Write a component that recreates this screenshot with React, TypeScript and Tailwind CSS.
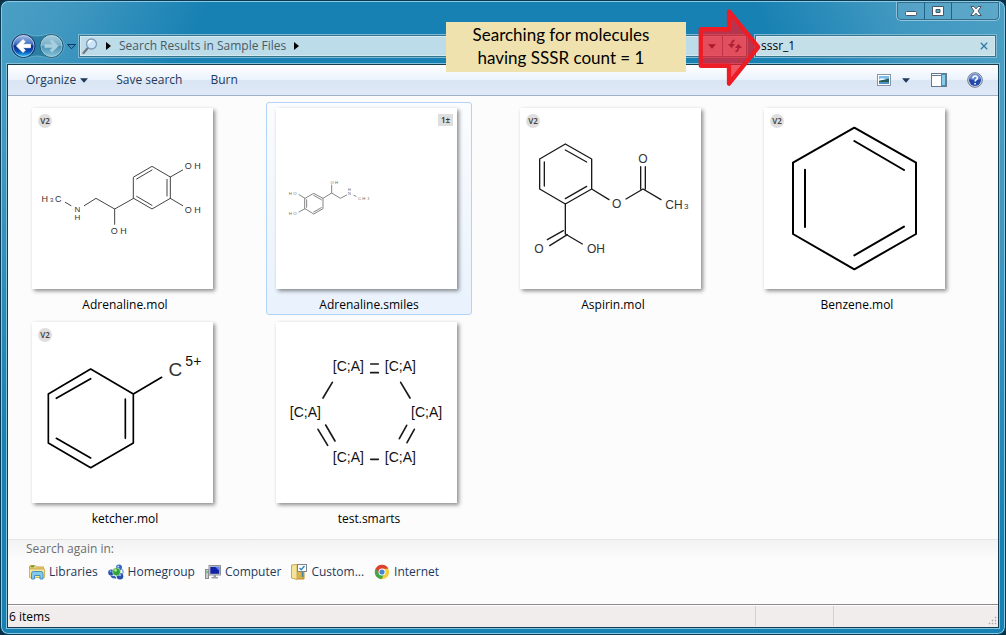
import type { ReactNode } from 'react';

const ink = '#1a1a1a';

function Label({ x, y, size, children, fill = '#333' }: { x: number; y: number; size: number; children: ReactNode; fill?: string }) {
  return (
    <text x={x} y={y} fontSize={size} fill={fill} textAnchor="middle" fontFamily="'Liberation Sans', Arial, sans-serif">
      {children}
    </text>
  );
}

function Drawing({ box, width, color = ink, d, children }: { box: string; width: number; color?: string; d: string; children?: ReactNode }) {
  return (
    <svg viewBox={box} className="block h-full w-full" aria-hidden="true">
      <path d={d} fill="none" stroke={color} strokeWidth={width} strokeLinecap="round" strokeLinejoin="round" />
      {children}
    </svg>
  );
}

const adrenalineMol = (
  <Drawing
    box="36 24 543 543"
    width={3}
    color="#444"
    d="M341 231L396 199L451 231V295L396 327L341 295ZM350 237L396 210M441 238V288M350 289L396 316M451 231L488 210M451 295L488 317M341 295L284 327L228 295L193 317M284 327V373M153 317L136 307"
  >
    <Label x={518} y={208} size={27}>O H</Label>
    <Label x={518} y={338} size={27}>O H</Label>
    <Label x={296} y={402} size={27}>O H</Label>
    <Label x={172} y={335} size={24}>N</Label>
    <Label x={172} y={360} size={24}>H</Label>
    <Label x={74} y={305} size={27}>H</Label>
    <Label x={95} y={305} size={18}>3</Label>
    <Label x={115} y={305} size={27}>C</Label>
  </Drawing>
);

const adrenalineSmiles = (
  <Drawing
    box="48 36 543 543"
    width={3}
    color="#858585"
    d="M135 307L161 292L189 307V338L161 354L135 338ZM140 311V334M161 298L184 311M161 348L184 335M135 307L117 296M135 338L117 348M189 307L215 291L241 307L260 297M215 291V267M282 298L288 301"
  >
    <Label x={98} y={296} size={13} fill="#666">H O</Label>
    <Label x={98} y={357} size={13} fill="#666">H O</Label>
    <Label x={223} y={264} size={13} fill="#666">O H</Label>
    <Label x={268} y={285} size={12} fill="#666">H</Label>
    <Label x={268} y={298} size={12} fill="#666">N</Label>
    <Label x={305} y={311} size={13} fill="#666">C H</Label>
    <Label x={325} y={313} size={9} fill="#666">3</Label>
  </Drawing>
);

const aspirin = (
  <Drawing
    box="30 24 543 543"
    width={4}
    d="M166 132L245 177V267L166 312L89 267V177ZM166 150L230 186M103 186V258M166 296L230 259M245 267L297 299M166 312V402M160 392L112 419M172 404L119 437M166 402L217 432M348 297L399 267L453 299M392 267V200M406 267V200"
  >
    <Label x={320} y={325} size={36}>O</Label>
    <Label x={399} y={189} size={36}>O</Label>
    <Label x={87} y={459} size={36}>O</Label>
    <Label x={258} y={459} size={36}>OH</Label>
    <Label x={492} y={326} size={36}>CH</Label>
    <Label x={529} y={326} size={24}>3</Label>
  </Drawing>
);

const benzene = (
  <Drawing
    box="27 24 543 543"
    width={6}
    color="#000"
    d="M298 83L483 188V402L298 508L114 402V188ZM298 123L447 210M150 209V381M298 466L447 380"
  />
);

const ketcher = (
  <Drawing
    box="36 18 543 543"
    width={5}
    color="#000"
    d="M212 159L340 234V381L212 455L85 381V234ZM212 188L109 247M316 249V367M109 367L212 426M340 234L425 184"
  >
    <Label x={466} y={180} size={57}>C</Label>
    <Label x={520} y={151} size={42} fill="#111">5+</Label>
  </Drawing>
);

const smarts = (
  <Drawing
    box="33 18 543 543"
    width={5}
    d="M317 144H340M317 170H340M317 430H340M202 199L174 246M407 199L435 246M159 340L188 388M182 327L210 375M425 328L403 368M448 340L426 380"
  >
    <Label x={250} y={166} size={42} fill="#111">[C;A]</Label>
    <Label x={406} y={166} size={42} fill="#111">[C;A]</Label>
    <Label x={121} y={302} size={42} fill="#111">[C;A]</Label>
    <Label x={485} y={302} size={42} fill="#111">[C;A]</Label>
    <Label x={250} y={438} size={42} fill="#111">[C;A]</Label>
    <Label x={406} y={438} size={42} fill="#111">[C;A]</Label>
  </Drawing>
);

type FileItem = { name: string; badge?: 'V2' | '1±'; selected?: boolean; art: ReactNode };

const files: FileItem[] = [
  { name: 'Adrenaline.mol', badge: 'V2', art: adrenalineMol },
  { name: 'Adrenaline.smiles', badge: '1±', selected: true, art: adrenalineSmiles },
  { name: 'Aspirin.mol', badge: 'V2', art: aspirin },
  { name: 'Benzene.mol', badge: 'V2', art: benzene },
  { name: 'ketcher.mol', badge: 'V2', art: ketcher },
  { name: 'test.smarts', art: smarts },
];

function FileTile({ file }: { file: FileItem }) {
  return (
    <li
      className={
        file.selected
          ? 'h-[213px] rounded-[3px] border border-[#b3d4f7] bg-linear-to-b from-[#fbfcfe] to-[#e9f2fd]'
          : 'h-[213px] border border-transparent'
      }
    >
      <div className="relative mt-[5px] ml-[9px] size-[181px] bg-white shadow-[2px_2px_4px_rgba(0,0,0,0.45)]">
        {file.art}
        {file.badge === 'V2' && (
          <span className="absolute top-[6px] left-[6px] flex size-[14px] items-center justify-center rounded-full bg-[#dedede] font-['Noto_Sans',sans-serif] text-[8px] font-semibold text-[#444]">
            V2
          </span>
        )}
        {file.badge === '1±' && (
          <span className="absolute top-[6px] right-[4px] flex h-[12px] w-[15px] items-center justify-center bg-[#dedede] font-['Noto_Sans',sans-serif] text-[8px] font-semibold text-[#333]">
            1±
          </span>
        )}
      </div>
      <p className="mt-[8px] text-center text-[12px] leading-[16px] text-black">{file.name}</p>
    </li>
  );
}

function Caret({ className }: { className: string }) {
  return (
    <svg viewBox="0 0 8 5" className={className} aria-hidden="true">
      <path d="M0 0.3H8L4 4.7Z" fill="currentColor" />
    </svg>
  );
}

function Chevron() {
  return (
    <svg viewBox="0 0 5 8" className="h-[8px] w-[5px]" aria-hidden="true">
      <path d="M0 0L5 4L0 8Z" fill="#000" />
    </svg>
  );
}

function NavButtons() {
  return (
    <div className="relative flex h-[26px] w-[68px] items-center">
      <svg viewBox="0 0 68 26" className="absolute inset-0 h-[26px] w-[68px]" aria-hidden="true">
        <defs>
          <linearGradient id="back" x1="0" y1="0" x2="0" y2="1">
            <stop offset="0" stopColor="#a9c1e8" />
            <stop offset=".42" stopColor="#3f6fc0" />
            <stop offset=".5" stopColor="#0a2d8c" />
            <stop offset=".75" stopColor="#0c54b8" />
            <stop offset="1" stopColor="#35d6ff" />
          </linearGradient>
          <linearGradient id="fwd" x1="0" y1="0" x2="0" y2="1">
            <stop offset="0" stopColor="#a9cddd" />
            <stop offset=".48" stopColor="#76aec8" />
            <stop offset=".52" stopColor="#4b93b5" />
            <stop offset="1" stopColor="#8cc6d9" />
          </linearGradient>
        </defs>
        <path d="M13 .7C19 .7 21 3 27 3S36 .7 42 .7A12.3 12.3 0 0 1 42 25.3C36 25.3 33 23 27 23S19 25.3 13 25.3A12.3 12.3 0 0 1 13 .7Z" fill="#2a7da3" stroke="#66acca" />
        <circle cx="13.5" cy="13" r="11.5" fill="url(#back)" stroke="#16315f" />
        <circle cx="13.5" cy="13" r="10.5" fill="none" stroke="#d5e4f5" strokeOpacity=".6" />
        <path d="M6.500 13L13 6.500L15.300 8.800L12.800 11.300H20.500V14.700H12.800L15.300 17.200L13 19.500Z" fill="#fff" stroke="#fff" strokeWidth=".8" strokeLinejoin="round" />
        <circle cx="41.5" cy="13" r="11.5" fill="url(#fwd)" stroke="#205f7c" />
        <circle cx="41.5" cy="13" r="10.5" fill="none" stroke="#c5e0ea" strokeOpacity=".5" />
        <path d="M48.500 13L42 6.500L39.700 8.800L42.200 11.300H34.500V14.700H42.200L39.700 17.200L42 19.500Z" fill="#a8cfdf" />
        <path d="M57.500 11.500H65.500L61.500 15.800Z" fill="#3f94bd" stroke="#083b63" />
      </svg>
      <button type="button" aria-label="Back" className="relative h-[26px] w-[27px] rounded-full" />
      <button type="button" aria-label="Forward" className="relative h-[26px] w-[27px] rounded-full" />
      <button type="button" aria-label="Recent pages" className="relative h-[26px] w-[14px]" />
    </div>
  );
}

function WindowButtons() {
  return (
    <div className="mr-[-1px] flex h-[19px] rounded-b-[5px] border border-t-0 border-[#8fc3db] shadow-[inset_0_0_0_1px_#1f5f80]">
      <button type="button" aria-label="Minimize" className="flex w-[28px] items-center justify-center border-r border-[#1f6488] bg-white/10">
        <svg viewBox="0 0 14 12" className="h-[12px] w-[14px]" aria-hidden="true">
          <rect x="1.5" y="6.5" width="11" height="4" rx="1" fill="#fff" stroke="#4b5563" />
        </svg>
      </button>
      <button type="button" aria-label="Maximize" className="flex w-[27px] items-center justify-center border-r border-[#1f6488] bg-white/10">
        <svg viewBox="0 0 12 12" className="size-[12px]" aria-hidden="true">
          <path d="M.5 1.500H11.500V10.500H.5ZM4 4.500V7.500H8V4.500Z" fill="#fff" fillRule="evenodd" stroke="#4b5563" />
        </svg>
      </button>
      <button type="button" aria-label="Close" className="flex w-[47px] items-center justify-center rounded-br-[5px] bg-white/10">
        <svg viewBox="0 0 12 12" className="size-[12px]" aria-hidden="true">
          <path d="M.8 1.500H4L6 3.800L8 1.500H11.200L8 6L11.200 10.500H8L6 8.200L4 10.500H.8L4 6Z" fill="#fff" stroke="#4b5563" />
        </svg>
      </button>
    </div>
  );
}

function AddressBar() {
  return (
    <div className="flex h-[24px] min-w-0 flex-1 items-center border border-[#7db7d2] bg-[#bcdcea] shadow-[inset_0_0_0_1px_#34758f,inset_0_0_0_2px_#d4e9f1]">
      <svg viewBox="0 0 16 16" className="ml-[3px] size-[16px] shrink-0" aria-hidden="true">
        <path d="M1.500 15L6 9.800" stroke="#74777c" strokeWidth="2.2" strokeLinecap="round" />
        <circle cx="9.5" cy="6" r="5" fill="#c8e5fb" stroke="#8399b3" strokeWidth="1.3" />
        <path d="M6.500 5.500A3.200 3.200 0 0 1 10 2.800" stroke="#fff" strokeWidth="1.5" fill="none" />
      </svg>
      <nav aria-label="Address" className="ml-[8px] flex flex-1 items-center gap-[8px] text-[12px] text-[#4a5a63]">
        <Chevron />
        <a href="#results" className="whitespace-nowrap">Search Results in Sample Files</a>
        <Chevron />
      </nav>
      <button type="button" aria-label="Previous locations" className="flex h-[22px] w-[20px] items-center justify-center text-[#000820]">
        <Caret className="h-[5px] w-[8px]" />
      </button>
      <button type="button" aria-label="Refresh" className="flex h-[22px] w-[25px] items-center justify-center border-l border-[#3b7792]">
        <svg viewBox="0 0 14 14" className="size-[14px]" aria-hidden="true">
          <path d="M6.500 1.500Q3.500 2 3.500 6M7.500 12.500Q10.500 12 10.500 8" fill="none" stroke="#052a50" strokeWidth="1.8" />
          <path d="M0 5H7L3.500 9.200ZM7 9H14L10.500 4.800Z" fill="#052a50" />
        </svg>
      </button>
    </div>
  );
}

function Callout() {
  return (
    <>
      <p className="absolute top-[21px] right-[319px] flex h-[50px] w-[240px] items-center justify-center bg-[#efe2ae] pr-[10px] pb-[3px] text-center font-[Lato,'Open_Sans',sans-serif] text-[17px] leading-[23px] text-black">
        Searching for molecules
        <br />
        having SSSR count = 1
      </p>
      <svg viewBox="54 22 190 238" className="pointer-events-none absolute top-[7px] right-[243px] h-[79px] w-[64px]" aria-hidden="true">
        <path d="M61 86H146V32L234 140L146 250V196H61Z" fill="#ee1c2c" fillOpacity=".74" stroke="#ee1c24" strokeWidth="13" strokeLinejoin="round" />
      </svg>
    </>
  );
}

function Toolbar() {
  return (
    <div className="flex h-[31px] items-center border-b border-[#a0b1c9] bg-[linear-gradient(#fff_0%,#ebf3fc_48%,#dae5f4_52%,#dfe9f7_100%)] px-[13px] text-[12px] text-[#1e395b]">
      <button type="button" className="ml-[5px] flex items-center gap-[4px]">
        Organize
        <Caret className="h-[5px] w-[8px]" />
      </button>
      <button type="button" className="ml-[28px]">Save search</button>
      <button type="button" className="ml-[28px]">Burn</button>
      <div className="ml-auto flex items-center pr-[2px]">
        <button type="button" aria-label="Change your view" className="flex items-center gap-[11px]">
          <svg viewBox="0 0 14 12" className="h-[12px] w-[14px]" aria-hidden="true">
            <rect x=".5" y=".5" width="13" height="11" fill="#fff" stroke="#8795a8" />
            <path d="M2 2H12V6H2Z" fill="#7dbbe8" />
            <path d="M2 6.500Q7 6 12 4.500V8H2Z" fill="#255c58" />
            <path d="M2 8H12V10H2Z" fill="#4f91c4" />
            <path d="M2 5.500Q4 3.500 7 4.500L9 5.200L2 6.500Z" fill="#f3fbff" />
          </svg>
          <Caret className="h-[5px] w-[8px]" />
        </button>
        <button type="button" aria-label="Show the preview pane" className="ml-[21px]">
          <svg viewBox="0 0 16 14" className="h-[14px] w-[16px]" aria-hidden="true">
            <rect x=".5" y=".5" width="15" height="13" fill="#fff" stroke="#64788f" />
            <path d="M.5 2.500H10" stroke="#64788f" />
            <rect x="10.5" y="1.5" width="4" height="11" fill="#84cce9" stroke="#3e91b6" />
          </svg>
        </button>
        <button type="button" aria-label="Get help" className="ml-[20px]">
          <svg viewBox="0 0 16 16" className="size-[16px]" aria-hidden="true">
            <circle cx="8" cy="8" r="7.3" fill="#d6dbe7" stroke="#6f7890" />
            <circle cx="8" cy="8" r="6" fill="#2449ad" />
            <path d="M2.500 7A5.500 5.500 0 0 1 13.500 7Q8 9 2.500 7Z" fill="#6c8bd4" />
            <path d="M5.800 6.200Q6 4 8.200 4T10.300 6Q10.300 7.200 8.900 8Q8.100 8.500 8.100 9.500M8.100 11V12.500" fill="none" stroke="#fff" strokeWidth="1.6" />
          </svg>
        </button>
      </div>
    </div>
  );
}

const libraryIcon = (
  <svg viewBox="0 0 16 16" className="size-[16px]" aria-hidden="true">
    <path d="M.5 3Q.5 1.500 2 1.500H6L7.500 3H14.500V5H.5Z" fill="#e9d27b" stroke="#c5a64a" />
    <path d="M.5 5H15.500V13.500H.5Z" fill="#f6e59b" stroke="#d2b65a" />
    <path d="M2 2.500H5" stroke="#48a238" strokeWidth="1.5" />
    <path d="M2.500 15V9.500Q2.500 7.500 4.500 7.500H12Q14 7.500 14 9.500V15H11V11.500H5.500V15Z" fill="#86caeb" stroke="#4493bf" />
  </svg>
);

const homegroupIcon = (
  <svg viewBox="0 0 16 16" className="size-[16px]" aria-hidden="true">
    <circle cx="11" cy="3.5" r="3" fill="#3565bf" />
    <circle cx="3.2" cy="8.5" r="3" fill="#2851ad" />
    <circle cx="12" cy="12.2" r="3.3" fill="#2851ad" />
    <circle cx="8.5" cy="7.8" r="4" fill="#2fa336" stroke="#e5f5e4" strokeWidth=".6" />
    <circle cx="7.5" cy="6.3" r="1.5" fill="#9be68a" />
    <circle cx="10.3" cy="2.4" r="1" fill="#b9d5fa" />
    <circle cx="2.5" cy="7.3" r="1" fill="#8dadf0" />
    <circle cx="12" cy="11" r="1.2" fill="#8bb5ee" />
    <path d="M2 11.500Q4 15.500 8.500 14.200L7 12Z" fill="#345fb7" />
    <path d="M13.500 5Q16 7 14.500 10" stroke="#8ba9df" strokeWidth="1.5" fill="none" />
  </svg>
);

const computerIcon = (
  <svg viewBox="0 0 16 16" className="size-[16px]" aria-hidden="true">
    <rect x=".5" y="5.5" width="3" height="9" fill="#c9cccf" stroke="#8a8d91" />
    <path d="M1.500 7H2.500V9H1.500Z" fill="#37a843" />
    <rect x="4" y="1.5" width="11.5" height="9.5" fill="#d8dadd" stroke="#8d9196" />
    <rect x="5.3" y="2.8" width="9" height="7" fill="#1220a5" />
    <path d="M10 2.800H14.300V7Z" fill="#5d83f0" />
    <path d="M8.500 11H11V13H13V14.500H6.500V13H8.500Z" fill="#9da0a5" />
  </svg>
);

const customIcon = (
  <svg viewBox="0 0 16 16" className="size-[16px]" aria-hidden="true">
    <path d="M5 3H13V15H5Z" fill="#d9b24b" stroke="#b98e2d" />
    <path d="M.5 1L6 .5V15.500L.5 14Z" fill="#f5e39b" stroke="#c8aa54" />
    <rect x="6.5" y=".5" width="9" height="7" fill="#fff" stroke="#7c878d" />
    <path d="M8.500 3.800L10.200 5.800L13.500 2" stroke="#2783bd" strokeWidth="1.3" fill="none" />
    <path d="M11.500 8V13" stroke="#3e8a9c" strokeWidth="1.5" />
  </svg>
);

const internetIcon = (
  <svg viewBox="0 0 16 16" className="size-[16px]" aria-hidden="true">
    <circle cx="8" cy="8" r="7.2" fill="#f4ce38" />
    <path d="M8 .8A7.200 7.200 0 0 1 14.400 4.700H8L4.900 9.500L1.500 5A7.200 7.200 0 0 1 8 .8Z" fill="#dc4131" />
    <path d="M1.700 4.500L5.200 9.600L9.800 10.500L7.500 15.200A7.200 7.200 0 0 1 1.700 4.500Z" fill="#45a648" />
    <circle cx="8" cy="8" r="3.5" fill="#fff" />
    <circle cx="8" cy="8" r="2.6" fill="#4586ce" />
  </svg>
);

const places = [
  { name: 'Libraries', icon: libraryIcon },
  { name: 'Homegroup', icon: homegroupIcon },
  { name: 'Computer', icon: computerIcon },
  { name: 'Custom...', icon: customIcon },
  { name: 'Internet', icon: internetIcon },
];

export default function App() {
  return (
    <div className="bg-[#0b2f44] font-['Open_Sans','Noto_Sans',sans-serif]">
      <div className="relative flex min-h-screen flex-col rounded-[8px] border border-[#0b3b54] bg-[#1781b3] bg-[linear-gradient(115deg,#4b9fc4_0px,#3f97c0_70px,#1781b300_190px),linear-gradient(245deg,#4b9fc4_0px,#3f97c0_110px,#1781b300_230px)] px-[6px] pb-[6px] shadow-[inset_0_0_0_1px_#8cc9e0]">
        <header>
          <div className="flex h-[33px] items-start justify-end pt-px">
            <WindowButtons />
          </div>
          <div className="flex h-[24px] items-center gap-[6px] pr-[2px] pl-[3px]">
            <div className="mr-[-6px]">
              <NavButtons />
            </div>
            <AddressBar />
            <div className="flex h-[24px] w-[243px] items-center border border-[#7db7d2] bg-[#c5dfe9] pr-[8px] pl-[6px] shadow-[inset_0_0_0_1px_#34758f,inset_0_0_0_2px_#d4e9f1]">
              <input type="text" aria-label="Search" defaultValue="sssr_1" className="h-[20px] min-w-0 flex-1 bg-transparent text-[12px] leading-[20px] text-black outline-none" />
              <button type="button" aria-label="Clear search">
                <svg viewBox="0 0 8 8" className="size-[8px]" aria-hidden="true">
                  <path d="M.8 .8L7.200 7.200M7.200 .8L.8 7.200" stroke="#327ba9" strokeWidth="1.3" />
                </svg>
              </button>
            </div>
          </div>
        </header>

        <div className="mt-[6px] flex flex-1 flex-col border border-[#123d52] bg-[#fcfcfc] shadow-[0_0_0_1px_#86c1da]">
          <Toolbar />
          <main id="results" className="flex-1 pt-[6px] pl-[14px]">
            <ul className="grid grid-cols-[repeat(auto-fill,206px)] gap-x-[38px] gap-y-px">
              {files.map((file) => (
                <FileTile key={file.name} file={file} />
              ))}
            </ul>
          </main>
          <section className="h-[65px] border-t border-[#e5e5e5] bg-linear-to-b from-[#f3f3f3] to-[#fcfcfc] to-30% pl-[18px]">
            <h2 className="text-[12px] leading-[18px] text-[#6d6d6d]">Search again in:</h2>
            <div className="mt-[5px] ml-[3px] flex gap-[10px] text-[12px] leading-[18px] text-[#1e395b]">
              {places.map((place) => (
                <a key={place.name} href="#results" className="flex items-center gap-[4px]">
                  {place.icon}
                  {place.name}
                </a>
              ))}
            </div>
          </section>
          <footer className="flex h-[23px] border-t border-[#8c8c8c] bg-[#f0edec] text-[12px] leading-[23px] text-black shadow-[inset_0_1px_0_#fff]">
            <span className="flex-1 pl-px">6 items</span>
            <span className="my-px w-[78px] border-l border-[#d2d2d2]" />
            <span className="my-px flex w-[165px] items-end justify-end border-l border-[#d2d2d2]">
              <svg viewBox="0 0 10 10" className="mr-px size-[10px]" aria-hidden="true">
                <path d="M8 1h1v1h-1zM5 4h1v1h-1zM8 4h1v1h-1zM2 7h1v1h-1zM5 7h1v1h-1zM8 7h1v1h-1z" fill="#a9a9a9" stroke="#a9a9a9" strokeWidth=".5" />
              </svg>
            </span>
          </footer>
        </div>
        <Callout />
      </div>
    </div>
  );
}
